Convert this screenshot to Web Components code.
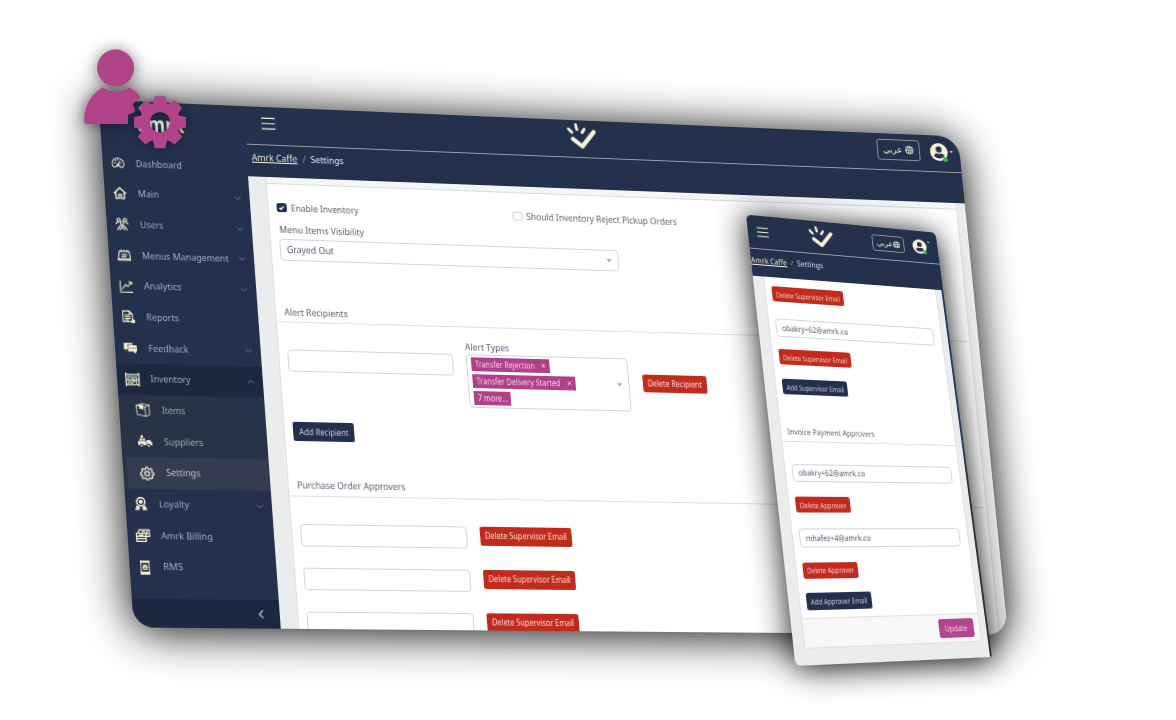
<!DOCTYPE html>
<html lang="en">
<head>
<meta charset="utf-8">
<title>Inventory settings</title>
<style>
html,body{margin:0;padding:0;background:#fff}
body{width:1176px;height:720px;overflow:hidden;font-family:"Noto Sans","Open Sans",sans-serif}
</style>
</head>
<body>
<hero-stage></hero-stage>
<script>
const define = (name, html, setup) => customElements.define(name, class extends HTMLElement {
  constructor(){ super(); this.attachShadow({mode:'open'}); }
  connectedCallback(){
    if (this.shadowRoot.childNodes.length) return;
    const t = document.createElement('template');
    t.innerHTML = typeof html === 'function' ? html(this) : html;
    this.shadowRoot.append(t.content.cloneNode(true));
    if (setup) setup(this);
  }
});

/* Projects a flat w x h box onto four corner points (tl, tr, br, bl). */
define('tilted-panel', el => `<style>
:host{position:absolute;left:0;top:0;display:block;transform-origin:0 0;border-radius:var(--r);box-shadow:var(--sh);overflow:visible}
.clip{width:100%;height:100%;border-radius:inherit;overflow:hidden}
</style><div class="clip"><slot></slot></div>`, el => {
  const W=+el.getAttribute('w'), H=+el.getAttribute('h');
  const [x0,y0,x1,y1,x2,y2,x3,y3]=el.getAttribute('quad').split(/[ ,]+/).map(Number);
  const dx1=x1-x2,dx2=x3-x2,dx3=x0-x1+x2-x3,dy1=y1-y2,dy2=y3-y2,dy3=y0-y1+y2-y3;
  const den=dx1*dy2-dx2*dy1, g=(dx3*dy2-dx2*dy3)/den, h=(dx1*dy3-dx3*dy1)/den;
  const m=[(x1-x0+g*x1)/W,(y1-y0+g*y1)/W,0,g/W,(x3-x0+h*x3)/H,(y3-y0+h*y3)/H,0,h/H,0,0,1,0,x0,y0,0,1];
  el.style.width=W+'px'; el.style.height=H+'px';
  el.style.transform='matrix3d('+m.map(n=>n.toFixed(10)).join(',')+')';
});

const P = {
  dash:'<path d="M4 19a10 10 0 1 1 16 0h-4l-2-2h-4l-2 2z"/><path d="M12 15l4-7M12 4v3M5 12h3M7 6.5l2 2M19 12h-2"/><circle cx="12" cy="15" r="1.6"/>',
  home:'<path stroke-width="2.4" d="M1.5 13L12 2.5 22.500 13M5 11v10.500h5v-7h4v7h5V11"/>',
  users:'<circle cx="6.500" cy="4.500" r="2.800"/><circle cx="17.500" cy="4.500" r="2.800"/><circle cx="12" cy="10" r="2.800"/><path stroke-width="2" d="M1.500 12q1-4 6-3.500M22.500 12q-1-4-6-3.500M3.500 22.500L9 14.500M20.500 22.500L15 14.500M7.500 22.500L12 17l4.500 5.500M9 14.500h6"/>',
  menu:'<path d="M4 5h17l1.500 16H1.500zM7.500 2v5M12.500 2v5M17.500 2v5M1.800 18.500h20.500"/><path stroke-width="2.200" d="M8 11h9M7 15h9"/>',
  chart:'<path d="M2 2v20h21M5 17l6-8 4 3 6-8M16 4h5.500v5"/>',
  report:'<path d="M3 2h11l5 5v14H3zM14 2v5h5M6 9h9M6 12h10M6 15h10M6 18h7"/><circle cx="20" cy="20" r="2.600" fill="currentColor"/>',
  chat:'<path fill="currentColor" stroke="none" d="M1 3h15v3H7v8H5l-2 3v-3H1z"/><path fill="currentColor" stroke="none" d="M8 7h15v11h-2v4l-4-4H8z"/><path stroke="#24314d" d="M11 12.500h2M14.700 12.500h2M18.500 12.500h2"/>',
  shelf:'<path stroke-width="2.200" d="M1 0v24M23 0v24M1 3.500h22M1 12.500h22M1 21h22"/><path stroke-width="1.600" d="M5 12V7h6v5M14 12V7.500h5v4M5 20v-4h4v4M12 20v-4.500h7v4.500"/>',
  box:'<path stroke-width="1.400" d="M1 4l8-3 14 2v17l-6 3L2 20zM1 4l15 2.500L23 3M16 6.500V23"/><path fill="currentColor" d="M7 3l5 1v6l-2-1.500-3 1z"/>',
  truck:'<path fill="currentColor" stroke="none" d="M0 11h14v7H0zM15 9h5l4 4v5h-9zM3 6h4v4H3zM8 6h4v4H8zM5 1h4v4.500H5z"/><circle cx="6" cy="19" r="2.600" fill="currentColor" stroke="#283347"/><circle cx="18" cy="19" r="2.600" fill="currentColor" stroke="#283347"/>',
  cog:'<path stroke-width="2.200" d="M10 1h4l.7 3 2 .9 2.700-1.600 2.800 2.800-1.600 2.700.9 2 3 .7v4l-3 .7-.9 1.500 1.600 2.700-2.800 2.300-2.700-1.500-2 .8-.7 2.500h-4l-.7-2.500-2-.8-2.700 1.500-2.800-2.300 1.600-2.700-.9-1.500-3-.7v-4l3-.7.9-2-1.600-2.700 2.800-2.800 2.700 1.600 2-.9z" transform="translate(1.200 1) scale(.9)"/><circle cx="12" cy="12.500" r="3.800" stroke-width="2.200"/>',
  medal:'<circle cx="12" cy="8.500" r="7" stroke-width="2.600"/><circle cx="12" cy="8.500" r="2.500" fill="currentColor"/><path fill="currentColor" d="M5 16l4 1.500-1 5-2-1.500-3 1zM19 16l-4 1.500 1 5 2-1.500 3 1z"/>',
  bill:'<path d="M5 2h18v11h-5M5 2v6M1 8h16v14H1zM1 13h16M1 17h16" stroke-width="2.200"/><circle cx="13" cy="6" r="2"/><path stroke-width="2.600" d="M19 4v6M5 11h8"/>',
  phone:'<path d="M5 1h14v22H5z" stroke-width="1.600"/><path fill="currentColor" d="M5 1h14v2H5zM5 20h14v3H5z"/><circle cx="12" cy="12" r="3"/><path d="M7 11h10M8 15h8M9 8h6"/>',
  down:'<path stroke-width="2.600" d="M1 8l11 9 11-9"/>', up:'<path stroke-width="2.600" d="M1 17l11-9 11 9"/>', left:'<path stroke-width="4.500" d="M18 1L7 12l11 11"/>',
  bars:'<path stroke-width="2.100" d="M0 2.500h24M0 12h24M0 21.500h24"/>',
  globe:'<circle cx="12" cy="12" r="11.500" fill="currentColor" stroke="none"/><path stroke="#24314d" stroke-width="1.500" d="M1 8.500h22M1 15.500h22M12 1v22M8 1.500q-4 10.500 0 21M16 1.500q4 10.500 0 21"/>',
  user:'<circle cx="12" cy="12" r="12" fill="currentColor" stroke="none"/><circle cx="12" cy="8.400" r="4.100" fill="#24314d" stroke="none"/><path fill="#24314d" stroke="none" d="M5 17.800q.3-3.800 4.300-4 2.700 1.200 5.400 0 4 .2 4.300 4-7 5.500-14 0z"/><circle cx="20" cy="21.500" r="3.300" fill="#3fb950" stroke="none"/>',
  caret:'<path fill="currentColor" stroke="none" d="M1 6h22L12 18z"/>',
  logo:'<path stroke-width="3.900" stroke-linecap="round" stroke-linejoin="round" d="M3.200 14.700l8.200 6.500L22.700 7.600"/><path stroke-width="2.600" stroke-linecap="round" d="M-.2 5.500l2.900 3.200M6.700 1.500l.7 4.400M14.300 5.300l-2.300 3.200"/>'
};
define('app-icon', el => `<style>:host{display:inline-block;flex:none;width:${el.getAttribute('s')}px;height:${el.getAttribute('s')}px}svg{display:block;width:100%;height:100%;overflow:visible}</style>
<svg viewBox="0 0 24 24" fill="none" stroke="currentColor" stroke-width="1.800">${P[el.getAttribute('n')]}</svg>`);

define('nav-item', el => `<style>
:host{display:flex;align-items:center;height:30.7px;box-sizing:border-box;padding-left:7.500px;color:#a6adb9;font-size:9.500px}
:host([sub]){padding-left:16px}
:host([open]){background:#1d2840}
:host([on]){background:#343c51;margin-left:4px;padding-left:12px;color:#c9cdd6}
app-icon{color:#f4f1d2}.t{margin-left:11px;flex:1}:host([sub]) .t{margin-left:11.500px}.c{color:#8690a1;margin-right:8.500px}
</style><app-icon n="${el.getAttribute('icon')}" s="13.500"></app-icon>
<span class="t"><fit-text w="${el.getAttribute('w')}">${el.textContent}</fit-text></span>
${el.hasAttribute('chev')?`<app-icon class="c" n="${el.getAttribute('chev')}" s="6.500"></app-icon>`:''}`);

define('ui-button', el => `<style>
:host{display:flex;align-items:center;justify-content:center;flex:none;box-sizing:border-box;width:${el.getAttribute('bw')}px;height:var(--bh,18.500px);margin-left:-1px;border-radius:2px;background:#c22a1c;color:#f8dcd9;font-size:var(--bf,9px)}
:host([navy]){background:#22304d;color:#d5dae4}
:host([pink]){background:#b5438d;color:#fbe6f4}
</style><slot></slot>`);

define('text-field', el => `<style>
:host{display:flex;align-items:center;justify-content:space-between;flex:none;box-sizing:border-box;width:${el.getAttribute('bw')}px;height:var(--fh,22.300px);margin-left:-1px;border:1px solid #d0d4dd;border-radius:3.500px;background:#fff;padding:0 6px 0 5.500px;color:#4b5563;font-size:var(--ff,9.700px)}
app-icon{color:#999}
</style><slot></slot>${el.hasAttribute('select')?'<app-icon n="caret" s="6"></app-icon>':''}`);

define('tag-chip', el => `<style>
:host{display:flex;align-items:center;justify-content:space-between;box-sizing:border-box;width:${el.getAttribute('bw')}px;height:13.800px;background:#b0408a;color:#f7dff0;font-size:9px;padding:0 4px 0 3.500px}
i{font-style:normal;font-size:8px}
</style><slot></slot>${el.hasAttribute('x')?'<i>×</i>':''}`);

define('multi-select', `<style>
:host{display:flex;align-items:center;justify-content:space-between;box-sizing:border-box;width:164px;height:54.700px;margin-left:-1px;border:1px solid #d0d4dd;border-radius:3px;padding:0 6px 0 4px}
.l{display:flex;flex-direction:column;gap:3.300px}app-icon{color:#999}
</style><div class="l"><slot></slot></div><app-icon n="caret" s="6"></app-icon>`);

define('check-box', el => `<style>
:host{display:flex;align-items:center;gap:4.700px;height:12px}
b{box-sizing:border-box;width:9.500px;height:9.500px;border-radius:2px;border:1px solid #cdd1d8;background:#fff;display:block}
:host([on]) b{background:#22304d;border-color:#22304d}
svg{display:none;width:7.500px;height:7.500px}:host([on]) svg{display:block}
</style><b><svg viewBox="0 0 8 8" fill="none" stroke="#fff" stroke-width="1.300"><path d="M1.800 4l1.500 1.600L6.300 2.400"/></svg></b><slot></slot>`);

define('lang-button', el => `<style>
:host{display:flex;align-items:center;justify-content:center;flex:none;gap:${el.hasAttribute('small')?0:3}px;box-sizing:border-box;width:${el.hasAttribute('small')?34:46}px;height:${el.hasAttribute('small')?17.5:22.5}px;border:1px solid #8c93a0;border-radius:3px;color:#f8f5d7;font:${el.hasAttribute('small')?7.5:9}px "DejaVu Sans",sans-serif}
</style><span lang="ar">عربي</span><app-icon n="globe" s="${el.hasAttribute('small')?7.5:9.5}"></app-icon>`);

/* Section title with its rule. */
define('section-title', `<style>:host{display:block;border-bottom:1px solid #dcdee2;color:#566070}
div{display:flex;align-items:center;height:var(--th,12px);padding:0 0 3.100px var(--tp,7px)}</style><div><slot></slot></div>`);

define('side-bar', `<style>
:host{display:flex;flex-direction:column;flex:none;width:141px;height:520px;background:#24314d}
.brand{height:47.200px;box-sizing:border-box;padding:8px 0 0 35.500px;font:bold 21px/28px "Open Sans",sans-serif;color:#eeebd0}
.sub{background:#283347}
.foot{margin-top:auto;height:28.500px;background:#1d2840;display:flex;align-items:center;justify-content:flex-end;color:#a6adb9}
.foot app-icon{margin-right:14px}
</style>
<div class="brand"><fit-text w="45.500">amrk</fit-text></div>
<nav-item icon="dash" w="44.700">Dashboard</nav-item>
<nav-item icon="home" w="20.500" chev="down">Main</nav-item>
<nav-item icon="users" w="22.700" chev="down">Users</nav-item>
<nav-item icon="menu" w="84" chev="down">Menus Management</nav-item>
<nav-item icon="chart" w="36.300" chev="down">Analytics</nav-item>
<nav-item icon="report" w="31.700">Reports</nav-item>
<nav-item icon="chat" w="38.700" chev="down">Feedback</nav-item>
<nav-item icon="shelf" w="38.700" chev="up" open>Inventory</nav-item>
<div class="sub">
<nav-item sub icon="box" w="22.300">Items</nav-item>
<nav-item sub icon="truck" w="37.800">Suppliers</nav-item>
<nav-item sub icon="cog" w="33" on>Settings</nav-item>
</div>
<nav-item icon="medal" w="29" chev="down">Loyalty</nav-item>
<nav-item icon="bill" w="49.500">Amrk Billing</nav-item>
<nav-item icon="phone" w="19">RMS</nav-item>
<div class="foot"><app-icon n="left" s="8"></app-icon></div>`);

define('desktop-app', `<style>
:host{display:flex;width:880px;height:520px;background:#ebecee;font-size:9.700px;line-height:12px;color:#566070}
main{flex:1;display:flex;flex-direction:column;min-width:0}
.head{background:#24314d;height:71.200px;flex:none;color:#f8f5d7;margin-left:-1px;padding-left:1px}
.top{display:grid;grid-template-columns:1fr auto 1fr;align-items:center;height:39px;box-sizing:border-box;border-bottom:1px solid #9aa0a9;padding:0 6.700px 4px 15.500px;margin-left:1px}
.top .r{display:flex;align-items:center;justify-content:flex-end}
.top app-icon.logo{margin:-1px 0 0 -47px}
.crumb{display:flex;align-items:center;height:26px;padding-left:5px}
.crumb u{text-decoration:none}.crumb i{font-style:normal;color:#8d95a3;margin:0 4.500px 0 5px}.crumb span{color:#e8ebf0}
.card{flex:1;margin:0 9px 0 17px;border-left:1px solid #dfe0e3;border-right:1px solid #dfe0e3;background:#fff;box-sizing:border-box;display:flex;flex-direction:column;overflow:hidden}
.strip{height:5.900px;flex:none;background:#f6f6f8;border-bottom:1px solid #d9dadd}
.pad{padding-left:9px}
.checks{display:grid;grid-template-columns:236.300px auto;margin:17.500px 0 0 -1px}
.lbl{display:flex;height:12px;align-items:center}
section-title{margin:0 2px 0 1px}
.row{display:flex;gap:14.500px;align-items:flex-start}
</style>
<side-bar></side-bar>
<main>
 <div class="head">
  <div class="top"><app-icon n="bars" s="13.500"></app-icon><app-icon class="logo" n="logo" s="27"></app-icon>
   <div class="r"><lang-button></lang-button><app-icon n="user" s="19" style="margin:0 2.300px 0 11px"></app-icon><app-icon n="caret" s="4"></app-icon></div></div>
  <div class="crumb"><u><fit-text w="45" line>Amrk Caffe</fit-text></u><i>/</i><span><fit-text w="33">Settings</fit-text></span></div>
 </div>
 <div class="card"><div class="strip"></div>
  <div class="pad">
   <div class="checks"><check-box on><fit-text w="67">Enable Inventory</fit-text></check-box><check-box><fit-text w="155">Should Inventory Reject Pickup Orders</fit-text></check-box></div>
   <div class="lbl" style="margin-top:10.100px"><fit-text w="84">Menu Items Visibility</fit-text></div>
   <text-field select bw="340.500" style="margin-top:3.500px"><fit-text w="46.500">Grayed Out</fit-text></text-field>
  </div>
  <section-title style="margin-top:45.200px"><fit-text w="62.600">Alert Recipients</fit-text></section-title>
  <div class="pad">
   <div class="row" style="margin-top:14.500px">
    <text-field bw="163.500" style="margin-top:12.800px"></text-field>
    <div><div class="lbl" style="margin-left:-1px"><fit-text w="44.500">Alert Types</fit-text></div>
     <multi-select style="margin-top:.5px"><tag-chip bw="79" x><fit-text w="60">Transfer Rejection</fit-text></tag-chip><tag-chip bw="104" x><fit-text w="84.500">Transfer Delivery Started</fit-text></tag-chip><tag-chip bw="37"><fit-text w="30">7 more...</fit-text></tag-chip></multi-select></div>
    <ui-button bw="66.500" style="margin-top:28.500px"><fit-text w="56">Delete Recipient</fit-text></ui-button>
   </div>
   <ui-button navy bw="59.500" style="margin-top:18px"><fit-text w="48.500">Add Recipient</fit-text></ui-button>
  </div>
  <section-title style="margin-top:38.500px"><fit-text w="106.500">Purchase Order Approvers</fit-text></section-title>
  <div class="pad">
   <div class="row" style="margin-top:27.500px"><text-field bw="163.500"></text-field><ui-button bw="92"><fit-text w="82">Delete Supervisor Email</fit-text></ui-button></div>
   <div class="row" style="margin-top:20.700px"><text-field bw="163.500"></text-field><ui-button bw="92"><fit-text w="82">Delete Supervisor Email</fit-text></ui-button></div>
   <div class="row" style="margin-top:20.700px"><text-field bw="163.500"></text-field><ui-button bw="92"><fit-text w="82">Delete Supervisor Email</fit-text></ui-button></div>
  </div>
 </div>
</main>`);

define('phone-app', `<style>
:host{display:flex;flex-direction:column;width:195px;height:430px;background:#ebecee;font-size:7.900px;line-height:10px;color:#566070;--bh:15.200px;--bf:7.300px;--fh:17.900px;--ff:8px;--th:10px;--tp:6px}
.head{background:#24314d;height:61px;flex:none;color:#f8f5d7}
.top{display:flex;align-items:center;height:34.400px;box-sizing:border-box;border-bottom:1px solid #9aa0a9;padding:0 8px .6px 9px}
.crumb{display:flex;align-items:center;height:21.500px;padding-left:.2px}
.crumb u{text-decoration:none}.crumb i{font-style:normal;color:#8d95a3;margin:0 3.300px}.crumb span{color:#e8ebf0}
.body{flex:1;display:flex;border-right:2.500px solid;border-image:linear-gradient(#253a63 45%,#333 50%) 1;min-height:0}
.card{width:174.500px;margin-left:10px;height:353px;border:1px solid #dfe0e3;border-top:0;background:#fff;display:flex;flex-direction:column}
.pad{padding-left:6.500px}.pad>*{margin-bottom:13.500px}
.foot{margin-top:auto;height:26px;flex:none;border-top:1px solid #dfe0e3;background:#f7f7f8;display:flex;align-items:center;justify-content:flex-end;padding-right:6px;--bh:18px;--bf:8px}
</style>
<div class="head">
 <div class="top"><app-icon n="bars" s="11"></app-icon><app-icon n="logo" s="22" style="margin-left:42px"></app-icon>
 <lang-button small style="margin-left:41px"></lang-button><app-icon n="user" s="15" style="margin-left:8.700px"></app-icon><app-icon n="caret" s="3" style="margin:-10px 0 0 1px"></app-icon></div>
 <div class="crumb"><u><fit-text w="35" line>Amrk Caffe</fit-text></u><i>/</i><span><fit-text w="26.300">Settings</fit-text></span></div>
</div>
<div class="body"><div class="card">
 <div class="pad">
  <ui-button bw="71.500" style="margin-top:9px;margin-bottom:16.600px"><fit-text w="63">Delete Supervisor Email</fit-text></ui-button>
  <text-field bw="161.500" style="margin-bottom:12.600px"><fit-text w="65.500">obakry+62@amrk.co</fit-text></text-field>
  <ui-button bw="71.500"><fit-text w="63">Delete Supervisor Email</fit-text></ui-button>
  <ui-button navy bw="64.500" style="margin-bottom:31.300px"><fit-text w="56.500">Add Supervisor Email</fit-text></ui-button>
 </div>
 <section-title><fit-text w="86">Invoice Payment Approvers</fit-text></section-title>
 <div class="pad" style="margin-top:21px">
  <text-field bw="161.500"><fit-text w="65.500">obakry+62@amrk.co</fit-text></text-field>
  <ui-button bw="53" style="margin-bottom:15.200px"><fit-text w="45">Delete Approver</fit-text></ui-button>
  <text-field bw="161.500"><fit-text w="63.500">mhafez+4@amrk.co</fit-text></text-field>
  <ui-button bw="53"><fit-text w="45">Delete Approver</fit-text></ui-button>
  <ui-button navy bw="63" style="margin-bottom:0"><fit-text w="54.500">Add Approver Email</fit-text></ui-button>
 </div>
 <div class="foot"><ui-button pink bw="35.300"><fit-text w="23">Update</fit-text></ui-button></div>
</div></div>`);

/* User silhouette with a gear, pinned over the desktop corner. */
define('admin-badge', () => {
  const teeth=[0,45,90,135].map(a=>`<path d="M-5.300-26h10.600l1.500 7v38l-1.500 7h-10.600l-1.500-7v-38z" transform="rotate(${a})"/>`).join('');
  return `<style>:host{position:absolute;left:60px;top:25px;display:block;width:150px;height:140px}svg{display:block;overflow:visible}
.p{filter:drop-shadow(0 1px 8px rgba(0,0,0,.55))}.g{filter:drop-shadow(0 1px 4px rgba(0,0,0,.4))}</style>
<svg width="150" height="140" viewBox="60 25 150 140">
<mask id="m"><rect x="-40" y="-40" width="80" height="80" fill="#fff"/><circle r="10.200" fill="#000"/></mask>
<g class="p" fill="#b0438a"><circle cx="115.600" cy="68" r="18.500"/>
<path d="M102.500 87.500Q115.500 96 129.500 87.500 136 91 140.500 97L133 104 136 110 133 113 128 115V124H87Q84 124 84 121 84.500 98 102.500 87.500z"/></g>
<path d="M141 101l-8 4 3 7-8 3v9h12l6-20z" fill="#1f2a43"/>
<g class="g"><g transform="translate(160 122.300)" fill="#b0438a"><g mask="url(#m)"><circle r="20"/>${teeth}</g></g></g>
</svg>`;
});

define('hero-stage', `<style>:host{display:block;position:relative;width:1176px;height:720px;overflow:hidden;background:#fff}
.d{--r:4px 22px 22px 20px;--sh:0 3px 44px 1px rgba(0,0,0,.95)}
.ph{--r:5px 5px 2px 6px;--sh:0 2px 30px 0 rgba(0,0,0,.95)}</style>
<tilted-panel class="d" w="880" h="520" quad="98.500,100 958,136.500 1008,634.800 133.700,627.500"><desktop-app></desktop-app></tilted-panel>
<tilted-panel class="ph" w="195" h="430" quad="746,214.600 935.500,232.700 992,657 795.500,666"><phone-app></phone-app></tilted-panel>
<admin-badge></admin-badge>`);

/* Label condensed or widened to an exact width; [line] underlines it. */
define('fit-text', el => `<style>:host{display:inline-block;white-space:nowrap;width:${el.getAttribute('w')}px}
span{display:inline-block;transform-origin:0 50%}:host([line]) span{text-decoration:underline;text-underline-offset:1.200px;text-decoration-thickness:.8px}</style><span><slot></slot></span>`, el => {
  const s=getComputedStyle(el), c=document.createElement('canvas').getContext('2d'), t=el.textContent.trim();
  c.font=`${s.fontWeight} 100px ${s.fontFamily}`;
  const w=c.measureText(t).width*parseFloat(s.fontSize)/100;
  el.shadowRoot.querySelector('span').style.transform=`scaleX(${(el.getAttribute('w')/w).toFixed(4)})`;
});
</script>
</body>
</html>
